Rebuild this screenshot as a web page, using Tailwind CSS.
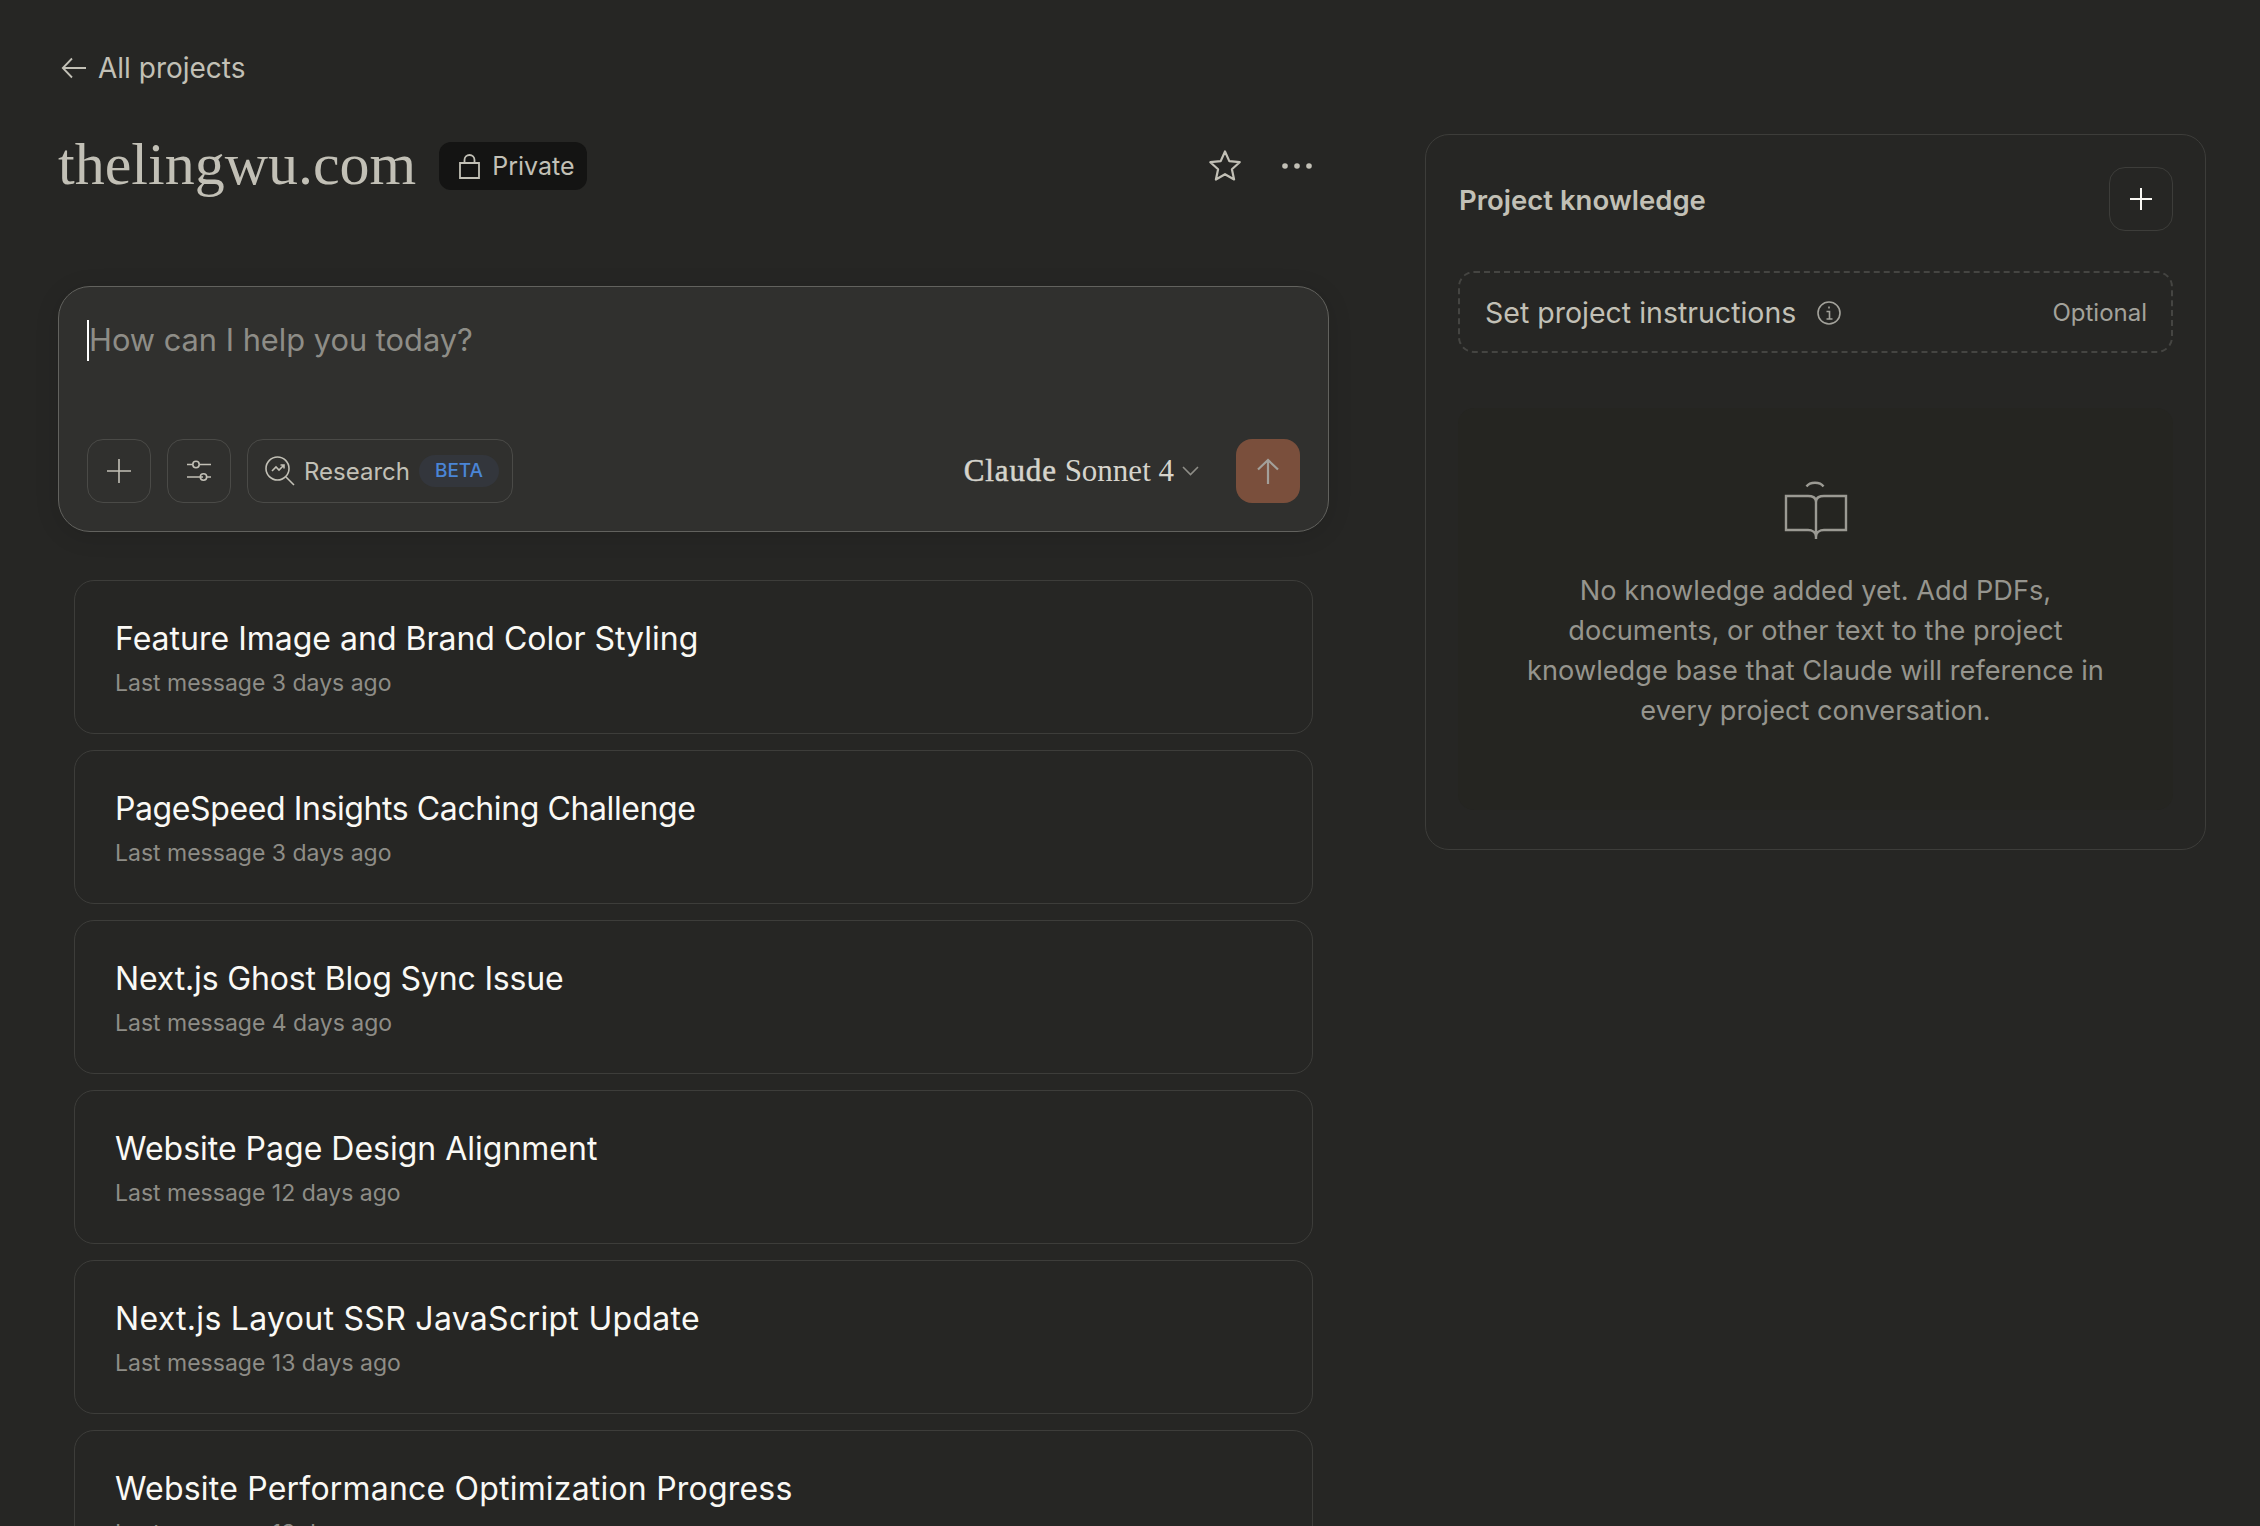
<!DOCTYPE html>
<html lang="en">
<head>
  <meta charset="UTF-8" />
  <title>thelingwu.com</title>
  <script src="https://cdn.jsdelivr.net/npm/@tailwindcss/browser@4"></script>
</head>
<body class="bg-[#262624] font-['Inter',sans-serif]">
  <div class="flex w-[2260px] h-[1526px] overflow-hidden pl-[58px]">
    <!-- Left column -->
    <main class="w-[1271px] shrink-0">
      <a class="mt-[48px] h-[40px] flex items-center gap-[11px] pl-[3px] text-[28px] text-[#c2c0b6]">
        <svg class="w-[26px] h-[26px]" viewBox="0 0 26 26" fill="none" stroke="#c2c0b6" stroke-width="1.8"><path d="M25 13H2M11 3.5 1.8 13l9.2 9.5"/></svg>
        <span>All projects</span>
      </a>
      <div class="mt-[48px] h-[60px] flex items-center justify-between pr-[17px]">
        <div class="flex items-center gap-[23px]">
          <h1 class="font-['Liberation_Serif',serif] text-[60px] leading-[60px] pb-[4px] text-[#c2c0b6]">thelingwu.com</h1>
          <span class="w-[148px] h-[48px] rounded-[12px] bg-[#141413] flex items-center gap-[11px] pl-[19px] text-[25px] text-[#c2c0b6]">
            <svg class="w-[23px] h-[25px]" viewBox="0 0 23 25" fill="none" stroke="#c2c0b6" stroke-width="1.8"><path d="M2 9h19v15H2zM6.5 9V6a5 5 0 0 1 10 0v3"/></svg>
            <span class="pt-[1px]">Private</span>
          </span>
        </div>
        <div class="flex items-center gap-[40px]">
          <svg class="w-[34px] h-[34px]" viewBox="0 0 34 34" fill="none" stroke="#c2c0b6" stroke-width="2.2" stroke-linejoin="round"><path d="M17 2.5l4.3 9.6 10.4 1.1-7.8 7 2.2 10.3L17 25.2l-9.1 5.3 2.2-10.3-7.8-7 10.4-1.1z"/></svg>
          <svg class="w-[30px] h-[8px]" viewBox="0 0 30 8" fill="#c2c0b6"><circle cx="3" cy="4" r="2.8"/><circle cx="15" cy="4" r="2.8"/><circle cx="27" cy="4" r="2.8"/></svg>
        </div>
      </div>

      <!-- Composer -->
      <section class="mt-[90px] h-[246px] rounded-[32px] border border-[#62625e] bg-[#30302e] shadow-[0_4px_24px_rgba(0,0,0,0.12)] pl-[28px] pr-[28px] pt-[32px] pb-[28px] flex flex-col justify-between">
        <div class="flex items-center h-[42px]">
          <span class="w-[2px] h-[41px] bg-white"></span>
          <span class="text-[30.8px] leading-[42px] text-[#8e8d87]">How can I help you today?</span>
        </div>
        <div class="flex items-center justify-between">
          <div class="flex items-center gap-[16px]">
            <button class="w-[64px] h-[64px] rounded-[16px] border border-[#4a4a47] flex items-center justify-center">
              <svg class="w-[24px] h-[24px]" viewBox="0 0 24 24" fill="none" stroke="#c2c0b6" stroke-width="1.6"><path d="M12 0v24M0 12h24"/></svg>
            </button>
            <button class="w-[64px] h-[64px] rounded-[16px] border border-[#4a4a47] flex items-center justify-center">
              <svg class="w-[24px] h-[24px]" viewBox="0 0 24 24" fill="none" stroke="#c2c0b6" stroke-width="1.6"><path d="M5.5 5.5H0M24 5.5H12.5M16 18H0M24 18h-4.5"/><circle cx="9" cy="5.5" r="3.2"/><circle cx="16.5" cy="18" r="3.2"/></svg>
            </button>
            <button class="w-[266px] h-[64px] rounded-[16px] border border-[#4a4a47] flex items-center pl-[17px]">
              <svg class="w-[30px] h-[30px]" viewBox="0 0 30 30" fill="none" stroke="#c2c0b6" stroke-width="1.6"><circle cx="12.5" cy="12.5" r="11.5"/><path d="M21 21l8 8M7 15l4-4 3 3 5-5M15.5 9H19v3.5"/></svg>
              <span class="ml-[9px] pt-[1px] text-[24px] text-[#c2c0b6]">Research</span>
              <span class="ml-[9px] w-[80px] h-[32px] rounded-full bg-[#33363c] flex items-center justify-center text-[19px] font-medium text-[#4a85d6]">BETA</span>
            </button>
          </div>
          <div class="flex items-center">
            <span class="pt-[1px] font-['Liberation_Serif',serif] text-[31px] text-[#d6d4cc]"><span class="tracking-[0.9px] [-webkit-text-stroke:0.5px_#d6d4cc]">Claude</span> Sonnet 4</span>
            <svg class="ml-[8px] w-[17px] h-[10px]" viewBox="0 0 17 10" fill="none" stroke="#8e8d87" stroke-width="1.6"><path d="M1 1l7.5 7.5L16 1"/></svg>
            <button class="ml-[37px] w-[64px] h-[64px] rounded-[16px] bg-[#7a4f3c] flex items-center justify-center">
              <svg class="w-[24px] h-[26px]" viewBox="0 0 24 26" fill="none" stroke="#a3a09a" stroke-width="2.2"><path d="M12 26V2M2 11.5 12 2l10 9.5"/></svg>
            </button>
          </div>
        </div>
      </section>

      <!-- Chat list -->
      <div class="mt-[48px] mx-[16px] flex flex-col gap-[16px]">
        <a class="block h-[154px] shrink-0 rounded-[20px] border border-[#3d3d3a] pl-[40px] pt-[36px]">
          <div class="text-[32px] leading-[44px] text-[#faf9f5]">Feature Image and Brand Color Styling</div>
          <div class="mt-[4px] text-[23px] leading-[36px] text-[#8e8d87]">Last message 3 days ago</div>
        </a>
        <a class="block h-[154px] shrink-0 rounded-[20px] border border-[#3d3d3a] pl-[40px] pt-[36px]">
          <div class="text-[32px] leading-[44px] tracking-[-0.4px] text-[#faf9f5]">PageSpeed Insights Caching Challenge</div>
          <div class="mt-[4px] text-[23px] leading-[36px] text-[#8e8d87]">Last message 3 days ago</div>
        </a>
        <a class="block h-[154px] shrink-0 rounded-[20px] border border-[#3d3d3a] pl-[40px] pt-[36px]">
          <div class="text-[32px] leading-[44px] tracking-[-0.15px] text-[#faf9f5]">Next.js Ghost Blog Sync Issue</div>
          <div class="mt-[4px] text-[23px] leading-[36px] text-[#8e8d87]">Last message 4 days ago</div>
        </a>
        <a class="block h-[154px] shrink-0 rounded-[20px] border border-[#3d3d3a] pl-[40px] pt-[36px]">
          <div class="text-[32px] leading-[44px] text-[#faf9f5]">Website Page Design Alignment</div>
          <div class="mt-[4px] text-[23px] leading-[36px] text-[#8e8d87]">Last message 12 days ago</div>
        </a>
        <a class="block h-[154px] shrink-0 rounded-[20px] border border-[#3d3d3a] pl-[40px] pt-[36px]">
          <div class="text-[32px] leading-[44px] tracking-[0.3px] text-[#faf9f5]">Next.js Layout SSR JavaScript Update</div>
          <div class="mt-[4px] text-[23px] leading-[36px] text-[#8e8d87]">Last message 13 days ago</div>
        </a>
        <a class="block h-[154px] shrink-0 rounded-[20px] border border-[#3d3d3a] pl-[40px] pt-[36px]">
          <div class="text-[32px] leading-[44px] tracking-[0.2px] text-[#faf9f5]">Website Performance Optimization Progress</div>
          <div class="mt-[4px] text-[23px] leading-[36px] text-[#8e8d87]">Last message 13 days ago</div>
        </a>
      </div>
    </main>

    <!-- Project knowledge -->
    <aside class="ml-[96px] mt-[134px] w-[781px] h-[716px] shrink-0 rounded-[24px] border border-[#3d3d3a] pl-[32px] pr-[32px] pt-[32px]">
      <div class="flex items-center justify-between h-[64px]">
        <h2 class="pl-[1px] pt-[4px] text-[27.5px] font-semibold text-[#c2c0b6]">Project knowledge</h2>
        <button class="w-[64px] h-[64px] rounded-[16px] border border-[#3d3d3a] flex items-center justify-center">
          <svg class="w-[22px] h-[22px]" viewBox="0 0 22 22" fill="none" stroke="#faf9f5" stroke-width="2"><path d="M11 0v22M0 11h22"/></svg>
        </button>
      </div>
      <div class="mt-[40px] h-[82px] rounded-[16px] border-2 border-dashed border-[#454542] flex items-center justify-between pl-[25px] pr-[24px]">
        <div class="flex items-center gap-[21px] pt-[2px]">
          <span class="text-[28.5px] text-[#c2c0b6]">Set project instructions</span>
          <svg class="w-[24px] h-[24px]" viewBox="0 0 24 24" fill="none" stroke="#a3a29b" stroke-width="1.6"><circle cx="12" cy="12" r="11"/><path d="M9.5 10.5H12.5V18M9.5 18h6M12 5.5v2"/></svg>
        </div>
        <span class="pt-[2px] text-[24px] text-[#a3a29b]">Optional</span>
      </div>
      <div class="mt-[55px] h-[402px] rounded-[16px] bg-[#252521] flex flex-col items-center pt-[72px]">
        <svg class="w-[64px] h-[60px]" viewBox="0 0 64 60" fill="none" stroke="#9b9a93" stroke-width="2.4"><path d="M22.5 6.5C26 1.5 36 1.5 39.5 6.5M32 22C32 17 28 16 24 16H2V50H24C28 50 32 52 32 57M32 22C32 17 36 16 40 16H62V50H40C36 50 32 52 32 57M32 22V59"/></svg>
        <p class="mt-[31px] text-center text-[27.2px] leading-[40px] text-[#96958e]">No knowledge added yet. Add PDFs,<br />documents, or other text to the project<br />knowledge base that Claude will reference in<br />every project conversation.</p>
      </div>
    </aside>
  </div>
</body>
</html>
